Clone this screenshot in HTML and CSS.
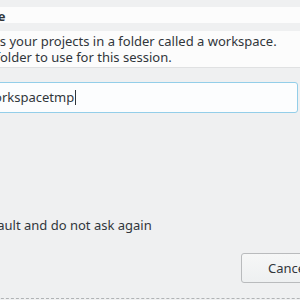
FILE: index.html
```html
<!DOCTYPE html>
<html lang="en">
<head>
    <meta charset="UTF-8">
    <meta name="viewport" content="width=device-width, initial-scale=1.0">
    <title>Workspace Launcher</title>
    <link rel="stylesheet" href="styles.css">
</head>
<body>
    <div class="dialog">
        <div class="title-band">
            <span class="title">Select a workspace</span>
        </div>
        <div class="message-band">
            <p class="message">Eclipse Platform stores your projects in a folder called a workspace.<br>Choose a workspace folder to use for this session.</p>
        </div>

        <div class="workspace-row">
            <label class="field-label">Workspace:</label>
            <div class="field">/home/user/workspacetmp<span class="caret"></span></div>
        </div>

        <div class="options">
            <label class="check"><span class="box"></span>Use this as the default and do not ask again</label>
        </div>

        <div class="buttons">
            <button class="btn">Cancel</button>
            <button class="btn">OK</button>
        </div>
        <div class="dash"></div>
    </div>
</body>
</html>
```

FILE: styles.css
```css
body {
    margin: 0;
    width: 300px;
    height: 300px;
    overflow: hidden;
    background-color: #eff0f1;
    font-family: "Noto Sans", sans-serif;
    font-size: 13px;
    color: #31363b;
}
.dialog {
    width: 700px;
    margin-left: -300px;
    padding-top: 7px;
}
.title-band {
    background-color: #fcfcfc;
    height: 16px;
    padding-left: 182px;
}
.title {
    font-weight: bold;
    line-height: 16px;
}
.message-band {
    margin-top: 8px;
    background-color: #fcfcfc;
    height: 36px;
    border-bottom: 1px solid #e0e1e2;
}
.message {
    margin: 0;
    padding: 2px 0 0 167px;
    line-height: 16px;
}
.workspace-row {
    display: flex;
    align-items: center;
    margin-top: 14px;
}
.field-label {
    width: 200px;
}
.field {
    width: 390px;
    height: 29px;
    line-height: 29px;
    padding-left: 6px;
    background-color: #fcfdfe;
    border: 1px solid #93cee9;
    border-radius: 3px;
}
.caret {
    display: inline-block;
    width: 1px;
    height: 15px;
    margin-left: 1px;
    vertical-align: -3px;
    background-color: #31363b;
}
.options {
    margin-top: 103px;
    padding-left: 163px;
}
.check {
    display: flex;
    align-items: center;
    gap: 6px;
}
.box {
    width: 14px;
    height: 14px;
    border: 1px solid #b0b3b5;
    border-radius: 2px;
    background-color: #fcfcfc;
}
.buttons {
    display: flex;
    gap: 8px;
    margin-top: 19px;
    padding-left: 541px;
}
.btn {
    height: 30px;
    padding: 0 26px;
    font-family: inherit;
    font-size: 13px;
    color: #31363b;
    background: linear-gradient(#f6f7f7, #eef0f1);
    border: 1px solid #b9bbbd;
    border-radius: 3px;
}
.dash {
    margin-top: 15px;
    border-top: 1px dashed #b0b3b5;
}
```
